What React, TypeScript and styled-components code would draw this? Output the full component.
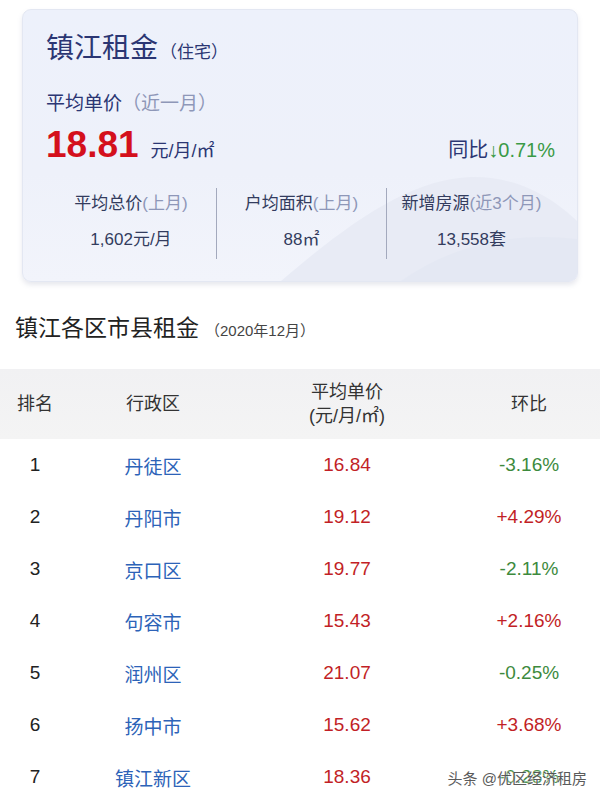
import React from 'react';
import styled, { createGlobalStyle } from 'styled-components';

const GlobalStyle = createGlobalStyle`
  html, body {
    margin: 0;
    padding: 0;
    background: #ffffff;
  }
  body {
    font-family: "Liberation Sans", Arial, "Noto Sans CJK SC", sans-serif;
    color: #222;
  }
`;

const Page = styled.div`
  width: 600px;
  height: 800px;
  overflow: hidden;
  position: relative;
  background: #fff;
`;

// top summary card
const Card = styled.div`
  position: relative;
  overflow: hidden;
  margin: 9px 22px 0 22px;
  height: 273px;
  box-sizing: border-box;
  padding: 22px 23px 0 23px;
  border-radius: 9px;
  background: linear-gradient(180deg, #edf1fb 0%, #eef1fa 60%, #f2f4fb 100%);
  border: 1px solid #e3e7f2;
  box-shadow: 0 3px 5px rgba(120, 130, 160, 0.18);
`;

const Hills = styled.svg`
  position: absolute;
  right: 0;
  bottom: 0;
  width: 556px;
  height: 120px;
  pointer-events: none;
`;

const CardInner = styled.div`
  position: relative;
`;

const Title = styled.div`
  font-size: 28px;
  line-height: 34px;
  color: #2b3673;
  display: flex;
  align-items: baseline;
`;

const TitleNote = styled.span`
  font-size: 17px;
  margin-left: 2px;
  color: #2b3673;
`;

const SubTitle = styled.div`
  margin-top: 21px;
  font-size: 19px;
  line-height: 26px;
  color: #2b3673;
`;

const Muted = styled.span<{ $size?: number; $gap?: number }>`
  color: #8e97b8;
  font-size: ${p => (p.$size ? `${p.$size}px` : 'inherit')};
  margin-left: ${p => (p.$gap ?? 0)}px;
`;

const PriceRow = styled.div`
  display: flex;
  align-items: baseline;
  justify-content: space-between;
  height: 40px;
  margin-top: 8px;
`;

const PriceMain = styled.div`
  display: flex;
  align-items: baseline;
`;

const BigPrice = styled.span`
  font-size: 37px;
  font-weight: bold;
  color: #d4101c;
  line-height: 40px;
`;

const Unit = styled.span`
  font-size: 18px;
  color: #2b3673;
  margin-left: 12px;
`;

const YoY = styled.div`
  font-size: 20px;
  color: #2b3673;
  margin-right: -1px;
`;

const Down = styled.span`
  color: #3a9a46;
`;

const Stats = styled.div`
  display: grid;
  grid-template-columns: repeat(3, 170px);
  margin-top: 23px;
`;

const Stat = styled.div<{ $divider?: boolean }>`
  height: 71px;
  display: flex;
  flex-direction: column;
  align-items: center;
  border-left: ${p => (p.$divider ? '1px solid #a3a9bd' : 'none')};
`;

const StatLabel = styled.div`
  margin-top: 5px;
  font-size: 17px;
  line-height: 22px;
  color: #333c5e;
  white-space: nowrap;
`;

const StatValue = styled.div`
  margin-top: 14px;
  font-size: 17px;
  line-height: 22px;
  color: #333c5e;
`;

// district table
const Section = styled.div`
  margin-top: 32px;
  padding-left: 15px;
  display: flex;
  align-items: baseline;
`;

const SectionTitle = styled.span`
  font-size: 23px;
  line-height: 28px;
  color: #222;
`;

const SectionNote = styled.span`
  font-size: 15px;
  color: #444;
  margin-left: 6px;
`;

const Table = styled.div`
  margin-top: 27px;
`;

const Cols = '70px 166px 222px 142px';

const HeadRow = styled.div`
  display: grid;
  grid-template-columns: ${Cols};
  height: 70px;
  align-items: center;
  background: linear-gradient(180deg, #f1f1f3 0%, #f4f4f4 100%);
  font-size: 18px;
  color: #333;
`;

const HeadCell = styled.div`
  text-align: center;
  line-height: 24px;
`;

const Row = styled.div`
  display: grid;
  grid-template-columns: ${Cols};
  height: 52px;
  align-items: center;
  font-size: 19px;
`;

const Rank = styled.div`
  text-align: center;
  color: #222;
`;

const District = styled.div`
  text-align: center;
  color: #2d63b8;
`;

const Price = styled.div`
  text-align: center;
  color: #c21f26;
`;

const Change = styled.div<{ $up: boolean }>`
  text-align: center;
  color: ${p => (p.$up ? '#c21f26' : '#3d8a3d')};
`;

const Watermark = styled.div`
  position: absolute;
  right: 13px;
  bottom: 12px;
  font-size: 15px;
  color: #4a4a4a;
  text-shadow: 0 0 2px #fff, 0 0 2px #fff;
  opacity: 0.9;
`;

const rows = [
  { rank: 1, name: '丹徒区', price: '16.84', change: '-3.16%' },
  { rank: 2, name: '丹阳市', price: '19.12', change: '+4.29%' },
  { rank: 3, name: '京口区', price: '19.77', change: '-2.11%' },
  { rank: 4, name: '句容市', price: '15.43', change: '+2.16%' },
  { rank: 5, name: '润州区', price: '21.07', change: '-0.25%' },
  { rank: 6, name: '扬中市', price: '15.62', change: '+3.68%' },
  { rank: 7, name: '镇江新区', price: '18.36', change: '-0.28%' },
];

const App = () => {
  return (
    <React.Fragment>
      <GlobalStyle />
      <Page>
        <Card>
          <Hills viewBox="0 0 556 120" preserveAspectRatio="none">
            <path d="M260 120 C 330 60, 390 18, 450 16 C 500 15, 535 40, 556 60 L556 120 Z" fill="#e8ebf5" />
            <path d="M380 120 C 430 85, 490 70, 556 78 L556 120 Z" fill="#e4e8f3" />
          </Hills>
          <CardInner>
            <Title>
              镇江租金<TitleNote>（住宅）</TitleNote>
            </Title>
            <SubTitle>
              平均单价<Muted>（近一月）</Muted>
            </SubTitle>
            <PriceRow>
              <PriceMain>
                <BigPrice>18.81</BigPrice>
                <Unit>元/月/㎡</Unit>
              </PriceMain>
              <YoY>
                同比<Down>↓0.71%</Down>
              </YoY>
            </PriceRow>
            <Stats>
              <Stat>
                <StatLabel>
                  平均总价<Muted>(上月)</Muted>
                </StatLabel>
                <StatValue>1,602元/月</StatValue>
              </Stat>
              <Stat $divider>
                <StatLabel>
                  户均面积<Muted>(上月)</Muted>
                </StatLabel>
                <StatValue>88㎡</StatValue>
              </Stat>
              <Stat $divider>
                <StatLabel>
                  新增房源<Muted>(近3个月)</Muted>
                </StatLabel>
                <StatValue>13,558套</StatValue>
              </Stat>
            </Stats>
          </CardInner>
        </Card>

        <Section>
          <SectionTitle>镇江各区市县租金</SectionTitle>
          <SectionNote>（2020年12月）</SectionNote>
        </Section>

        <Table>
          <HeadRow>
            <HeadCell>排名</HeadCell>
            <HeadCell>行政区</HeadCell>
            <HeadCell>
              平均单价
              <br />
              (元/月/㎡)
            </HeadCell>
            <HeadCell>环比</HeadCell>
          </HeadRow>
          {rows.map(r => (
            <Row key={r.rank}>
              <Rank>{r.rank}</Rank>
              <District>{r.name}</District>
              <Price>{r.price}</Price>
              <Change $up={r.change.startsWith('+')}>{r.change}</Change>
            </Row>
          ))}
        </Table>
        <Watermark>头条 @优区经济租房</Watermark>
      </Page>
    </React.Fragment>
  );
};

export default App;
